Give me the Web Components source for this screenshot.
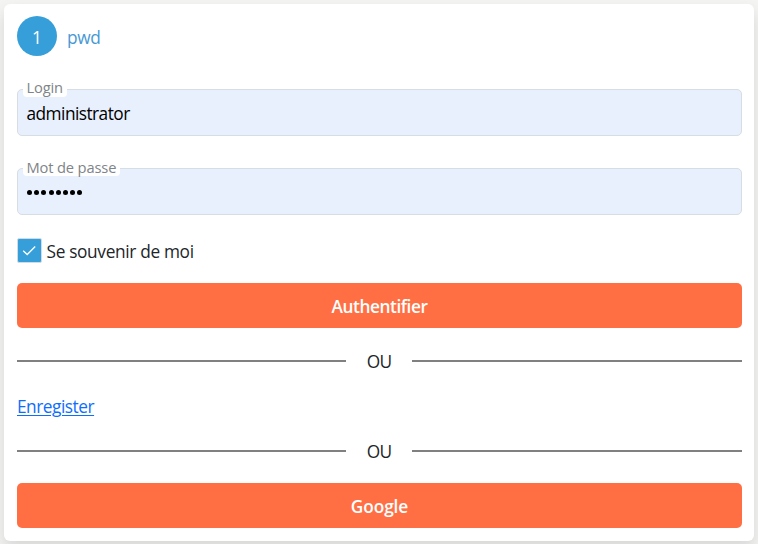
<!DOCTYPE html>
<html lang="fr">
<head>
<meta charset="utf-8">
<title>Authentification</title>
<style>
html,body{margin:0;height:100%}
body{font-family:"Open Sans","Noto Sans",sans-serif;font-size:17.3px;line-height:24px;color:#212529;background:#f4f4f3}
</style>
</head>
<body>
<login-page></login-page>
<script>
const define = (name, html) => customElements.define(name, class extends HTMLElement {
  constructor() {
    super();
    const t = document.createElement('template');
    t.innerHTML = html;
    this.attachShadow({mode: 'open'}).append(t.content.cloneNode(true));
  }
});

define('step-header', `<style>
:host{display:flex;align-items:center;gap:10px;height:40px;color:#4799d5}
.n{width:40px;height:40px;border-radius:50%;background:#369fd9;color:#fff;display:flex;align-items:center;justify-content:center}
.n span,.t{padding-top:3px}
.t{letter-spacing:-.4px}
</style><div class="n"><span><slot name="number"></slot></span></div><div class="t"><slot></slot></div>`);

define('text-field', `<style>
:host{display:block;position:relative;box-sizing:border-box;height:47px;border:1px solid #d6dde3;border-radius:5px;background:#e8f0fe;padding:12px 8.5px 0;color:#000;letter-spacing:-.54px}
.label{position:absolute;left:5px;top:-10px;height:17px;line-height:var(--label-line,17px);padding:0 4px 0 3.5px;background:#fff;border-radius:4px;color:#808488;font-size:14.7px;letter-spacing:var(--label-spacing,-.15px);white-space:nowrap}
</style><span class="label"><slot name="label"></slot></span><slot></slot>`);

define('password-dots', `<style>
:host{display:flex;gap:2.2px;padding:9px 0 0 .5px}
i{width:5px;height:5px;border-radius:50%;background:#000}
</style>${'<i></i>'.repeat(8)}`);

define('check-box', `<style>
:host{display:flex;height:25px;gap:4.5px;letter-spacing:-.34px}
.b{box-sizing:border-box;width:25px;height:25px;border:1px solid #cfdce5;border-radius:2px;background:#369fd9}
svg{display:block}
.t{padding-top:2px}
</style><div class="b"><svg width="23" height="23" viewBox="0 0 23 23" fill="none" stroke="#fff" stroke-width="1.3"><path d="M5.2 11.7 9.2 15.5 17.2 7.5"/></svg></div><div class="t"><slot></slot></div>`);

define('action-button', `<style>
:host{display:flex;height:45px;border-radius:5px;background:#ff6f43;color:#fff;font-weight:600;align-items:center;justify-content:center;letter-spacing:var(--button-spacing,-.45px)}
span{padding-top:3px}
</style><span><slot></slot></span>`);

define('or-divider', `<style>
:host{display:grid;grid-template-columns:329px 66px 1fr;align-items:center;height:24px;text-align:center;letter-spacing:-.8px}
i{height:2px;background:#808080}
span{padding-top:2px}
</style><i></i><span><slot></slot></span><i></i>`);

define('text-link', `<style>
:host{display:block;height:24px}
a{color:#0d6efd;text-decoration:underline;text-underline-offset:2px;text-decoration-thickness:1px;letter-spacing:-.48px}
</style><a href="#"><slot></slot></a>`);

define('login-card', `<style>
:host{display:block;box-sizing:border-box;height:537px;border-radius:6px;background:#fff;padding:12px 12px 13px 13px;box-shadow:0 8px 16px rgba(0,0,0,.12)}
</style><slot></slot>`);

define('login-page', `<style>
:host{display:block;box-sizing:border-box;height:544px;padding:4px 4px 3px;overflow:hidden}
.login{margin-top:33px;--label-line:15px}.pass{margin-top:32px}
check-box{margin-top:23px}.auth{margin-top:20px}.or1{margin-top:20px}
text-link{margin-top:23px}.or2{margin-top:19px}.google{margin-top:21px;--button-spacing:-.1px}
</style>
<login-card>
<step-header><span slot="number">1</span>pwd</step-header>
<text-field class="login"><span slot="label">Login</span>administrator</text-field>
<text-field class="pass"><span slot="label">Mot de passe</span><password-dots></password-dots></text-field>
<check-box>Se souvenir de moi</check-box>
<action-button class="auth">Authentifier</action-button>
<or-divider class="or1">OU</or-divider>
<text-link>Enregister</text-link>
<or-divider class="or2">OU</or-divider>
<action-button class="google">Google</action-button>
</login-card>`);
</script>
</body>
</html>
